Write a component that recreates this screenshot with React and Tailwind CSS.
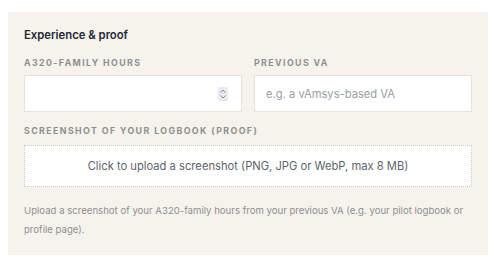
export default function App() {
  return (
    <div className="bg-white pt-3 px-2 font-['Inter',sans-serif]">
      <div className="bg-[#f6f3ed] px-4 pt-[15px] pb-4 w-[480px]">
        <h3 className="text-[11.3px] leading-4 font-semibold text-[#1f2937]">Experience &amp; proof</h3>
        <div className="grid grid-cols-2 gap-3 mt-[14px]">
          <div>
            <label className="block text-[8.8px] leading-3 font-bold tracking-[0.16em] uppercase text-[#8f8f8f] mb-[6px]">A320-family hours</label>
            <div className="relative">
              <input type="number" className="w-full h-[37px] bg-white border border-[#e7e3db] px-[11px] text-[11.2px] text-[#374151] outline-none [appearance:textfield] [&::-webkit-inner-spin-button]:appearance-none" />
              <div className="absolute right-[14px] top-[12px] w-[10px] h-[14px] bg-[#e9e9ef] rounded-[2px] flex flex-col items-center justify-center gap-[2px] pointer-events-none">
                <svg width="6" height="4" viewBox="0 0 6 4" fill="none" stroke="#8a8d96" strokeWidth="1"><path d="M0.5 3.5 L3 1 L5.5 3.5" /></svg>
                <svg width="6" height="4" viewBox="0 0 6 4" fill="none" stroke="#8a8d96" strokeWidth="1"><path d="M0.5 0.5 L3 3 L5.5 0.5" /></svg>
              </div>
            </div>
          </div>
          <div>
            <label className="block text-[8.8px] leading-3 font-bold tracking-[0.16em] uppercase text-[#8f8f8f] mb-[6px]">Previous VA</label>
            <input type="text" placeholder="e.g. a vAmsys-based VA" className="w-full h-[37px] bg-white border border-[#e7e3db] px-[11px] text-[11.2px] text-[#374151] placeholder-[#9a9ea6] outline-none" />
          </div>
        </div>
        <label className="block mt-[13px] text-[8.8px] leading-3 font-bold tracking-[0.16em] uppercase text-[#8f8f8f] mb-[8px]">Screenshot of your logbook (proof)</label>
        <div className="h-[42px] bg-white border border-dotted border-[#cfcac0] flex items-center justify-center text-[11.2px] text-[#5d636d]">
          Click to upload a screenshot (PNG, JPG or WebP, max 8 MB)
        </div>
        <p className="mt-[14px] text-[9.6px] leading-[19px] text-[#8f8f8f]">
          Upload a screenshot of your A320-family hours from your previous VA (e.g. your pilot logbook or profile page).
        </p>
      </div>
    </div>
  )
}
